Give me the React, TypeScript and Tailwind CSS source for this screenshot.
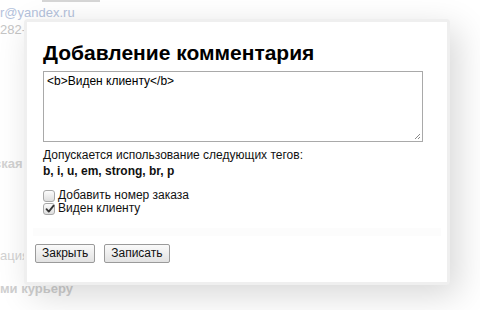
import React from "react";

function Check({ checked }: { checked?: boolean }) {
  return (
    <span className="relative flex h-[12px] w-[12px] shrink-0 items-center justify-center rounded-[3px] border border-[#a8a8a8] bg-gradient-to-b from-[#fcfcfc] to-[#dedede]">
      {checked && (
        <svg width="10" height="10" viewBox="0 0 10 10" className="absolute left-[1px] top-[0px]">
          <path d="M1.5 5.2 L3.8 7.6 L8.6 1.6" fill="none" stroke="#333" strokeWidth="1.8" strokeLinecap="round" strokeLinejoin="round" />
        </svg>
      )}
    </span>
  );
}

export default function App() {
  return (
    <div className="relative h-[310px] w-[480px] overflow-hidden bg-white font-['Liberation_Sans',Arial,sans-serif]">
      {/* faded background page */}
      <div className="flex flex-col">
        <div className="ml-[42px] h-[2px] w-[58px] bg-[#d6d6d6]" />
        <div className="mt-[3px] text-[13px] leading-[15px] text-[#b4c2dc]">r@yandex.ru</div>
        <div className="mt-[2px] text-[13px] leading-[15px] text-[#c4c4c4]">282-4</div>
        <div className="mt-[119px] -ml-[6px] text-[13px] font-bold leading-[15px] text-[#d2d2d2]">ская</div>
        <div className="mt-[77px] text-[13px] leading-[15px] text-[#d2d2d2]">ация</div>
        <div className="mt-[18px] text-[13px] font-bold leading-[15px] text-[#cfcfcf]">ми курьеру</div>
      </div>

      {/* dialog */}
      <div className="absolute left-[24px] top-[19px] w-[426px] rounded-[4px] border-[3px] border-[#efefef] bg-white shadow-[8px_10px_34px_rgba(0,0,0,0.16)]">
        <div className="flex h-[260px] flex-col bg-white">
          <div className="flex flex-col pl-[16px] pt-[19px]">
            <h1 className="text-[21px] font-bold leading-[24px] text-black">Добавление комментария</h1>
            <div className="relative mt-[6px] h-[71px] w-[380px] border border-[#a9a9a9] bg-white px-[3px] py-[2px] text-[12px] leading-[15px] text-black">
              &lt;b&gt;Виден клиенту&lt;/b&gt;
              <svg width="7" height="7" viewBox="0 0 7 7" className="absolute bottom-[1px] right-[1px]">
                <path d="M1 6 L6 1 M4 6 L6 4" stroke="#8a8a8a" strokeWidth="1" />
              </svg>
            </div>
            <div className="mt-[6px] text-[12px] leading-[15px] text-[#111]">Допускается использование следующих тегов:</div>
            <div className="mt-[1px] text-[12px] font-bold leading-[15px] text-[#111]">b, i, u, em, strong, br, p</div>
            <div className="mt-[10px] flex flex-col">
              <label className="flex h-[13px] items-center gap-[3px] text-[12px] leading-[13px] text-[#111]">
                <Check />
                <span>Добавить номер заказа</span>
              </label>
              <label className="flex h-[13px] items-center gap-[3px] text-[12px] leading-[13px] text-[#111]">
                <Check checked />
                <span>Виден клиенту</span>
              </label>
            </div>
          </div>
          <div className="mx-[6px] mt-[13px] h-[8px] bg-[#fcfcfc]" />
          <div className="mt-[8px] flex gap-[9px] pl-[8px]">
            <button className="h-[19px] rounded-[2px] border border-[#9a9a9a] bg-gradient-to-b from-[#fafafa] to-[#e2e2e2] px-[6px] text-[12px] leading-[17px] text-[#111]">Закрыть</button>
            <button className="h-[19px] rounded-[2px] border border-[#9a9a9a] bg-gradient-to-b from-[#fafafa] to-[#e2e2e2] px-[6px] text-[12px] leading-[17px] text-[#111]">Записать</button>
          </div>
        </div>
      </div>
    </div>
  );
}
